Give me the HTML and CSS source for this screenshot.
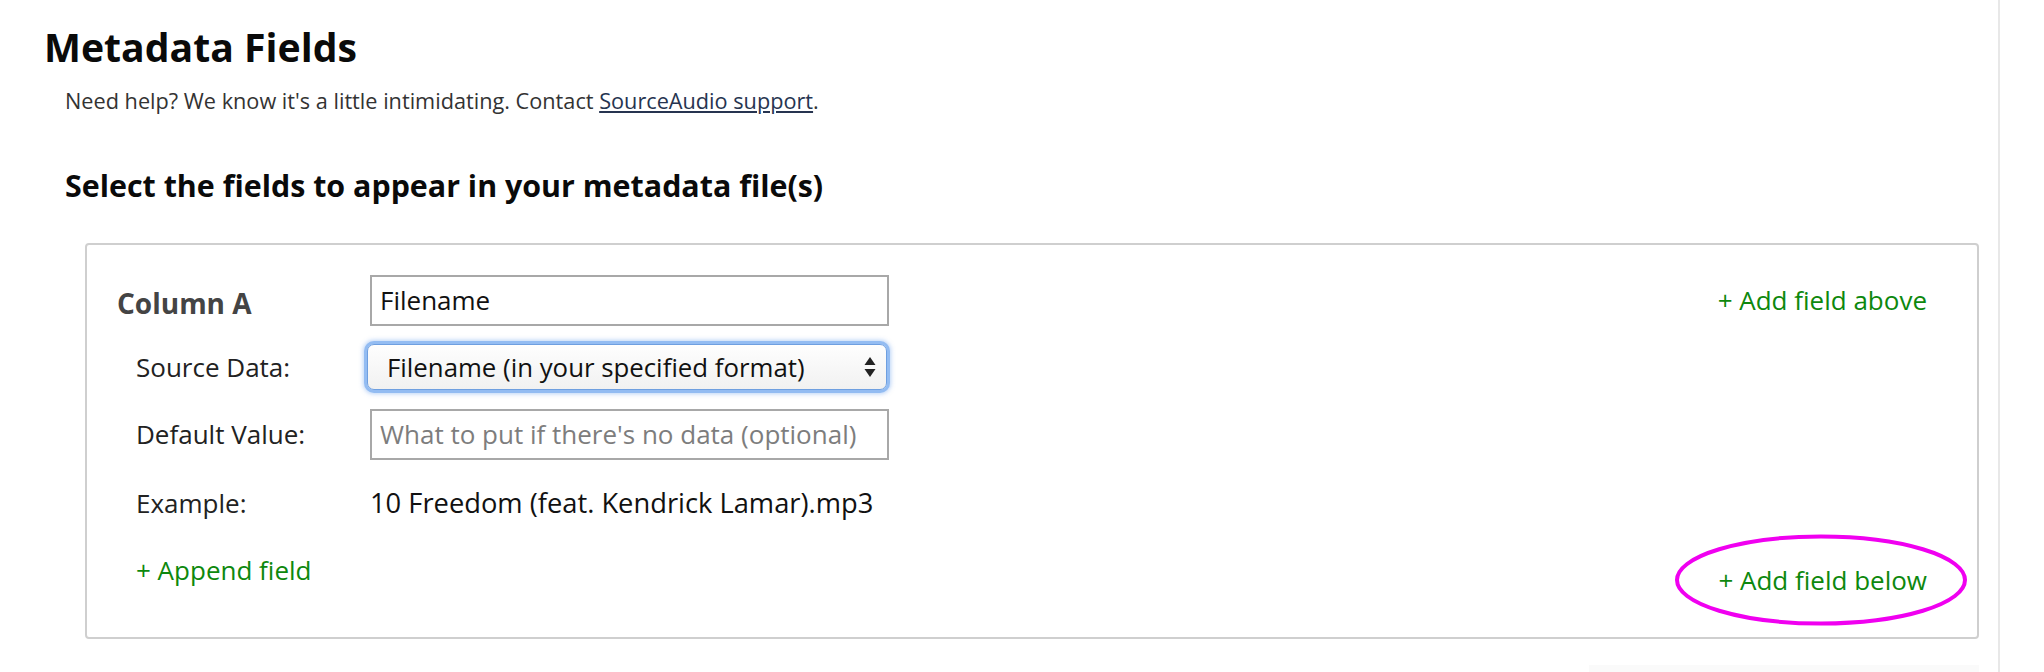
FILE: index.html
```html
<!DOCTYPE html>
<html lang="en">
<head>
<meta charset="utf-8">
<title>Metadata Fields</title>
<link rel="stylesheet" href="styles.css">
</head>
<body>
<div class="page">
  <main class="main">
    <h1 class="title">Metadata Fields</h1>
    <p class="help">Need help? We know it's a little intimidating. Contact <a class="help-link" href="#">SourceAudio support</a>.</p>
    <h2 class="subtitle">Select the fields to appear in your metadata file(s)</h2>

    <section class="field-box">
      <div class="row row-head">
        <div class="col-label">Column A</div>
        <input class="text-input" type="text" value="Filename">
        <a class="add-link add-above" href="#">+ Add field above</a>
      </div>

      <div class="row">
        <div class="sub-label">Source Data:</div>
        <div class="select-wrap">
          <select class="select-input">
            <option>Filename (in your specified format)</option>
          </select>
          <svg class="select-arrows" width="12" height="22" viewBox="0 0 12 22" aria-hidden="true">
            <path d="M6 1 L11.5 9 L0.5 9 Z" fill="#222"/>
            <path d="M0.5 13 L11.5 13 L6 21 Z" fill="#222"/>
          </svg>
        </div>
      </div>

      <div class="row">
        <div class="sub-label">Default Value:</div>
        <input class="text-input" type="text" placeholder="What to put if there's no data (optional)">
      </div>

      <div class="row row-text">
        <div class="sub-label">Example:</div>
        <div class="example">10 Freedom (feat. Kendrick Lamar).mp3</div>
      </div>

      <div class="row row-foot">
        <a class="add-link append" href="#">+ Append field</a>
        <span class="below-wrap">
          <a class="add-link" href="#">+ Add field below</a>
          <svg class="circle-mark" width="296" height="96" viewBox="0 0 296 96" aria-hidden="true">
            <ellipse cx="147" cy="47" rx="144" ry="43.5" fill="none" stroke="#f000f0" stroke-width="4"/>
          </svg>
        </span>
      </div>
    </section>

    <div class="next-strip"></div>
  </main>
  <aside class="side"></aside>
</div>
</body>
</html>
```

FILE: styles.css
```css
* {
  box-sizing: border-box;
}

html, body {
  margin: 0;
  padding: 0;
  background: #ffffff;
}

body {
  font-family: "Open Sans", "Liberation Sans", sans-serif;
  color: #222;
  width: 2044px;
  height: 672px;
  overflow: hidden;
}

.page {
  display: flex;
  height: 672px;
}

.main {
  width: 2000px;
  border-right: 2px solid #e8e8e8;
  padding-left: 44px;
  padding-right: 19px;
  display: flex;
  flex-direction: column;
}

.side {
  flex: 1;
}

.title {
  margin: 23px 0 0 0;
  font-size: 39.2px;
  line-height: 48px;
  font-weight: 700;
  color: #0a0a0a;
}

.help {
  margin: 15px 0 0 21px;
  font-size: 21.7px;
  line-height: 30px;
  color: #333;
}

.help-link {
  color: #263450;
  text-decoration: underline;
}

.subtitle {
  margin: 50px 0 0 21px;
  font-size: 30.4px;
  line-height: 40px;
  font-weight: 700;
  color: #0a0a0a;
}

.field-box {
  margin: 37px 0 0 41px;
  border: 2px solid #cfcfcf;
  border-radius: 4px;
  padding: 32px 50px 30px 30px;
  display: flex;
  flex-direction: column;
  gap: 21px;
  height: 396px;
}

.row {
  display: flex;
  align-items: center;
  min-height: 46px;
}

.col-label {
  width: 253px;
  font-size: 28px;
  font-weight: 700;
  color: #444;
  padding-top: 5px;
}

.sub-label {
  width: 234px;
  margin-left: 19px;
  font-size: 26px;
  color: #222;
}

.text-input {
  width: 519px;
  height: 51px;
  border: 2px solid #a8a8a8;
  border-radius: 0;
  padding: 0 8px;
  font-family: "Open Sans", "Liberation Sans", sans-serif;
  font-size: 26px;
  color: #111;
  background: #fff;
  outline: none;
}

.text-input::placeholder {
  color: #7d7d7d;
}

.select-wrap {
  position: relative;
  margin-left: -3px;
  width: 520px;
  height: 46px;
}

.select-input {
  -webkit-appearance: none;
  appearance: none;
  width: 100%;
  height: 100%;
  border: 1px solid #6e9fe0;
  border-radius: 7px;
  background: linear-gradient(#fefefe, #f1f1f1);
  box-shadow: 0 0 0 3px #93bcf2, 0 0 4px 4px rgba(120, 170, 240, 0.5);
  padding: 0 40px 0 19px;
  font-family: "Open Sans", "Liberation Sans", sans-serif;
  font-size: 25.8px;
  color: #111;
  outline: none;
}

.select-arrows {
  position: absolute;
  right: 11px;
  top: 12px;
}

.row-text {
  min-height: 54px;
  padding-bottom: 5px;
}

.example {
  font-size: 27.3px;
  color: #111;
}

.add-link {
  font-size: 26px;
  color: #0d880d;
  text-decoration: none;
}

.add-above {
  margin-left: auto;
}

.row-foot {
  justify-content: space-between;
  align-items: flex-start;
  min-height: 60px;
  margin-top: -1px;
}

.append {
  margin-left: 19px;
}

.below-wrap {
  position: relative;
  display: inline-block;
  margin-top: 10px;
}

.circle-mark {
  position: absolute;
  left: -44px;
  top: -29px;
  pointer-events: none;
}

.next-strip {
  margin: 26px 0 0 auto;
  width: 390px;
  height: 20px;
  background: #fafafa;
}
```
